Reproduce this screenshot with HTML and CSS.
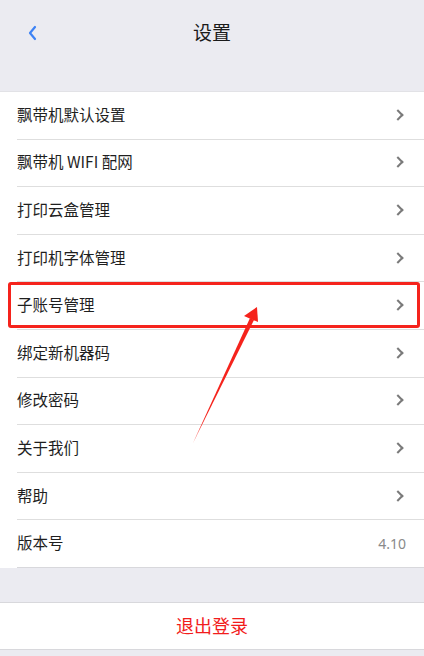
FILE: index.html
```html
<!DOCTYPE html>
<html lang="zh-CN">
<head>
  <meta charset="UTF-8">
  <title>设置</title>
  <link rel="stylesheet" href="styles.css">
</head>
<body>
  <div class="page">
    <header class="nav">
      <svg class="back" width="12" height="16" viewBox="0 0 12 16"><path d="M8 2 L3 8 L8 14" fill="none" stroke="#3d82f5" stroke-width="2.2" stroke-linecap="round" stroke-linejoin="round"/></svg>
      <h1>设置</h1>
    </header>

    <ul class="list">
      <li class="row"><span>飘带机默认设置</span><i class="chev"></i></li>
      <li class="row"><span>飘带机 WIFI 配网</span><i class="chev"></i></li>
      <li class="row"><span>打印云盒管理</span><i class="chev"></i></li>
      <li class="row"><span>打印机字体管理</span><i class="chev"></i></li>
      <li class="row"><span>子账号管理</span><i class="chev"></i><div class="mark"></div></li>
      <li class="row"><span>绑定新机器码</span><i class="chev"></i></li>
      <li class="row"><span>修改密码</span><i class="chev"></i></li>
      <li class="row"><span>关于我们</span><i class="chev"></i></li>
      <li class="row"><span>帮助</span><i class="chev"></i></li>
      <li class="row"><span>版本号</span><em class="version">4.10</em></li>
    </ul>

    <div class="logout">退出登录</div>

    <svg class="arrow" width="424" height="656" viewBox="0 0 424 656">
      <path d="M193 443 L250 318 L254 320 Z" fill="#f5231c"/>
      <path d="M257 307 L244 316 L258 322 Z" fill="#f5231c"/>
    </svg>
  </div>
</body>
</html>
```

FILE: styles.css
```css
* { box-sizing: border-box; }
body { margin: 0; font-family: "Noto Sans CJK SC", "Noto Sans", sans-serif; background: #ebebf1; color: #1f1f1f; }
.page { position: relative; width: 424px; height: 656px; overflow: hidden; }

.nav { height: 91px; display: flex; justify-content: center; padding-top: 18px; position: relative; }
.nav h1 { margin: 0; font-size: 19px; font-weight: 400; line-height: 28px; color: #1a1a1a; }
.back { position: absolute; left: 27px; top: 25px; }

.list { list-style: none; margin: 0; padding: 0; background: #fff; border-top: 1px solid #e2e2e6; }
.row { position: relative; height: 47.6px; display: flex; align-items: center; justify-content: space-between; margin-left: 17px; padding-right: 18px; padding-bottom: 3px; border-bottom: 1px solid #dedede; font-size: 15.5px; }
.row:last-child { border-bottom: 1px solid #d8d8dc; }
.chev { width: 8px; height: 8px; border-top: 2px solid #7a7a7a; border-right: 2px solid #7a7a7a; transform: rotate(45deg); margin-right: 4px; margin-top: 2px; }
.version { font-style: normal; font-size: 14px; color: #8a8a8a; font-family: "Noto Sans", sans-serif; margin-top: 2px; }

.mark { position: absolute; left: -9px; right: 4px; top: 0; bottom: 1px; border: 3px solid #f5231c; border-radius: 3px; }

.logout { margin-top: 34px; height: 48px; background: #fff; display: flex; align-items: center; justify-content: center; color: #f21c1c; font-size: 18px; padding-bottom: 2px; border-top: 1px solid #d8d8dc; border-bottom: 1px solid #d8d8dc; }

.arrow { position: absolute; left: 0; top: 0; pointer-events: none; }
```
